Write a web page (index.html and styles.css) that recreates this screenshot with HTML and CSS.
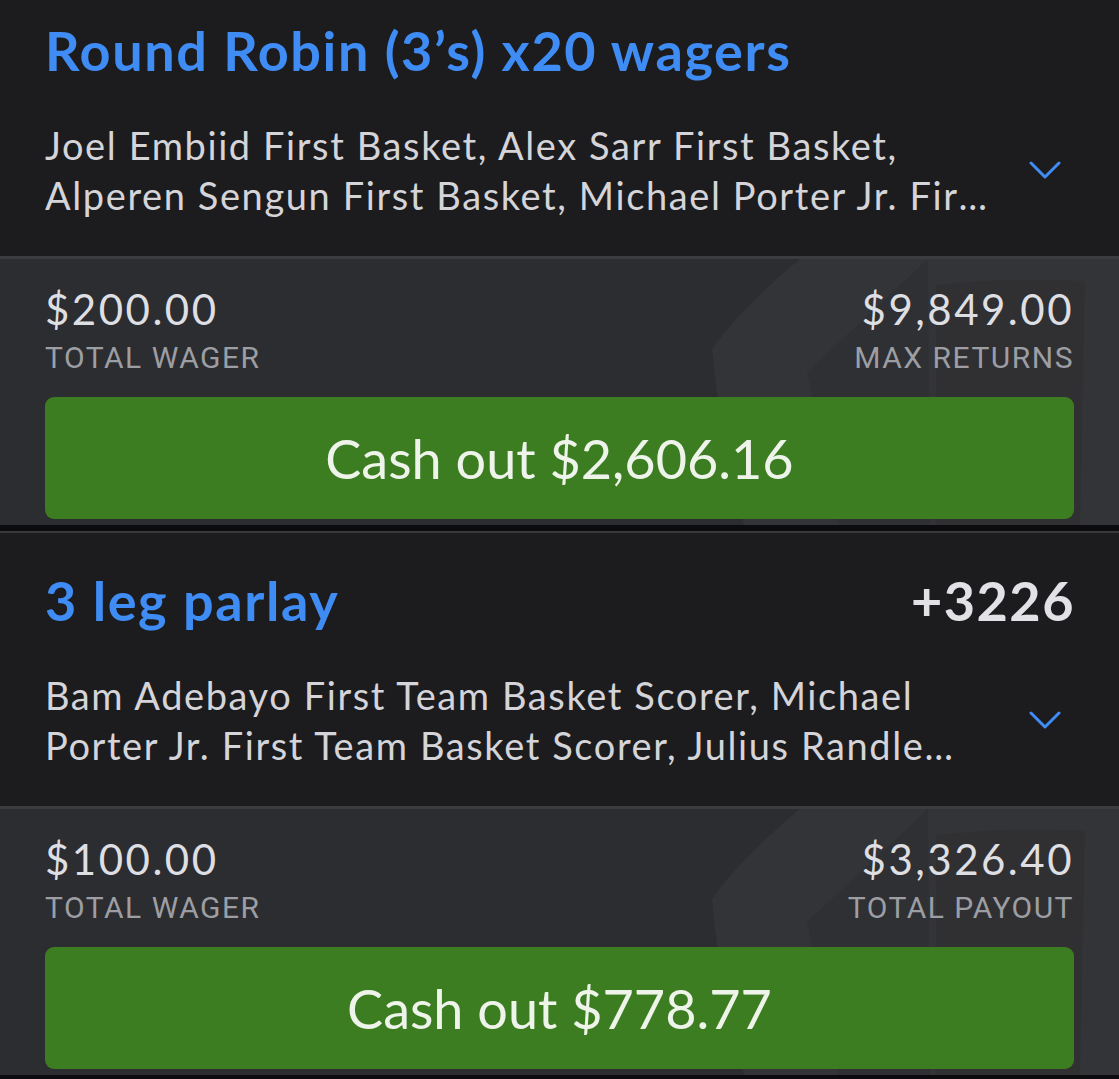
FILE: index.html
```html
<!DOCTYPE html>
<html>
<head lang="en">
    <meta charset="UTF-8">
    <title>My Bets</title>
    <link rel="stylesheet" href="styles.css">
</head>
<body>
    <div class="feed">
        <div class="card">
            <div class="card-head">
                <div class="title-row">
                    <h2 class="title">Round Robin (3’s) x20 wagers</h2>
                </div>
                <div class="legs-row">
                    <p class="legs">Joel Embiid First Basket, Alex Sarr First Basket, Alperen Sengun First Basket, Michael Porter Jr. First Basket, Bam Adebayo First Basket</p>
                    <svg class="chevron" width="32" height="20" viewBox="0 0 32 20">
                        <polyline points="2,3 16,17 30,3" fill="none" stroke="#3f8cf5" stroke-width="3" stroke-linecap="round" stroke-linejoin="round"/>
                    </svg>
                </div>
            </div>
            <div class="card-foot">
                <svg class="mark" width="419" height="270" viewBox="0 0 419 270">
                    <path d="M12 90 Q40 50 100 0 L419 0 L419 270 L45 270 Q20 180 12 90 Z" fill="#ffffff" fill-opacity="0.035"/>
                    <path d="M107 113 L228 0 L230 270 L140 270 Z" fill="#000000" fill-opacity="0.07"/>
                    <path d="M236 26 Q310 18 385 22 L380 270 L236 270 Z" fill="#000000" fill-opacity="0.06"/>
                </svg>
                <div class="stats">
                    <div class="stat">
                        <div class="amount">$200.00</div>
                        <div class="label">TOTAL WAGER</div>
                    </div>
                    <div class="stat right">
                        <div class="amount">$9,849.00</div>
                        <div class="label">MAX RETURNS</div>
                    </div>
                </div>
                <button class="cashout">Cash out $2,606.16</button>
            </div>
        </div>

        <div class="divider"></div>

        <div class="card">
            <div class="card-head">
                <div class="title-row">
                    <h2 class="title">3 leg parlay</h2>
                    <span class="odds">+3226</span>
                </div>
                <div class="legs-row">
                    <p class="legs">Bam Adebayo First Team Basket Scorer, Michael Porter Jr. First Team Basket Scorer, Julius Randle First Team Basket Scorer</p>
                    <svg class="chevron" width="32" height="20" viewBox="0 0 32 20">
                        <polyline points="2,3 16,17 30,3" fill="none" stroke="#3f8cf5" stroke-width="3" stroke-linecap="round" stroke-linejoin="round"/>
                    </svg>
                </div>
            </div>
            <div class="card-foot">
                <svg class="mark" width="419" height="270" viewBox="0 0 419 270">
                    <path d="M12 90 Q40 50 100 0 L419 0 L419 270 L45 270 Q20 180 12 90 Z" fill="#ffffff" fill-opacity="0.035"/>
                    <path d="M107 113 L228 0 L230 270 L140 270 Z" fill="#000000" fill-opacity="0.07"/>
                    <path d="M236 26 Q310 18 385 22 L380 270 L236 270 Z" fill="#000000" fill-opacity="0.06"/>
                </svg>
                <div class="stats">
                    <div class="stat">
                        <div class="amount">$100.00</div>
                        <div class="label">TOTAL WAGER</div>
                    </div>
                    <div class="stat right">
                        <div class="amount">$3,326.40</div>
                        <div class="label">TOTAL PAYOUT</div>
                    </div>
                </div>
                <button class="cashout">Cash out $778.77</button>
            </div>
        </div>
    </div>
</body>
</html>
```
FILE: styles.css
```css
*{
    margin:0px;
    padding:0px;
    box-sizing:border-box;
}
body{
    background-color:#0c0c0e;
    font-family:Lato, "Noto Sans", sans-serif;
    overflow:hidden;
}
/* page is scrolled a little, top of first card is cut */
.feed{
    margin-top:-16px;
}
.card-head{
    background-color:#1c1c1e;
    padding:35px 45px 36px 45px;
}
.title-row{
    display:flex;
    justify-content:space-between;
    align-items:baseline;
}
.title{
    color:#3f8cf5;
    font-size:54px;
    font-weight:700;
    line-height:64px;
    letter-spacing:1.6px;
}
.odds{
    color:#e2e2e6;
    font-size:54px;
    font-weight:700;
    letter-spacing:1.5px;
    margin-right:-1px;
}
.legs-row{
    display:flex;
    align-items:center;
    justify-content:space-between;
    margin-top:37px;
}
.legs{
    width:948px;
    color:#d4d4d9;
    font-size:38px;
    line-height:50px;
    letter-spacing:1.6px;
    display:-webkit-box;
    -webkit-line-clamp:2;
    -webkit-box-orient:vertical;
    overflow:hidden;
}
.chevron{
    margin-right:13px;
}
.card-foot{
    position:relative;
    overflow:hidden;
    background-color:#2c2d30;
    border-top:3px solid #3b3c3f;
    padding:25px 45px 6px 45px;
}
.mark{
    position:absolute;
    left:700px;
    top:0px;
}
.stats{
    position:relative;
    display:flex;
    justify-content:space-between;
}
.stat.right{
    text-align:right;
}
.amount{
    color:#dedfe3;
    font-size:42px;
    line-height:50px;
    letter-spacing:2.5px;
}
.label{
    margin-top:9px;
    color:#9c9ea3;
    font-family:Roboto, "Noto Sans", sans-serif;
    font-size:30px;
    letter-spacing:1.5px;
    line-height:30px;
}
.cashout{
    position:relative;
    display:block;
    width:100%;
    height:122px;
    margin-top:24px;
    border:none;
    border-radius:9px;
    background-color:#3c7d22;
    color:#eef4ea;
    font-family:Lato, "Noto Sans", sans-serif;
    font-size:54px;
}
.divider{
    height:8px;
    background-color:#0c0c0e;
    border-bottom:2px solid #38393c;
}
```
